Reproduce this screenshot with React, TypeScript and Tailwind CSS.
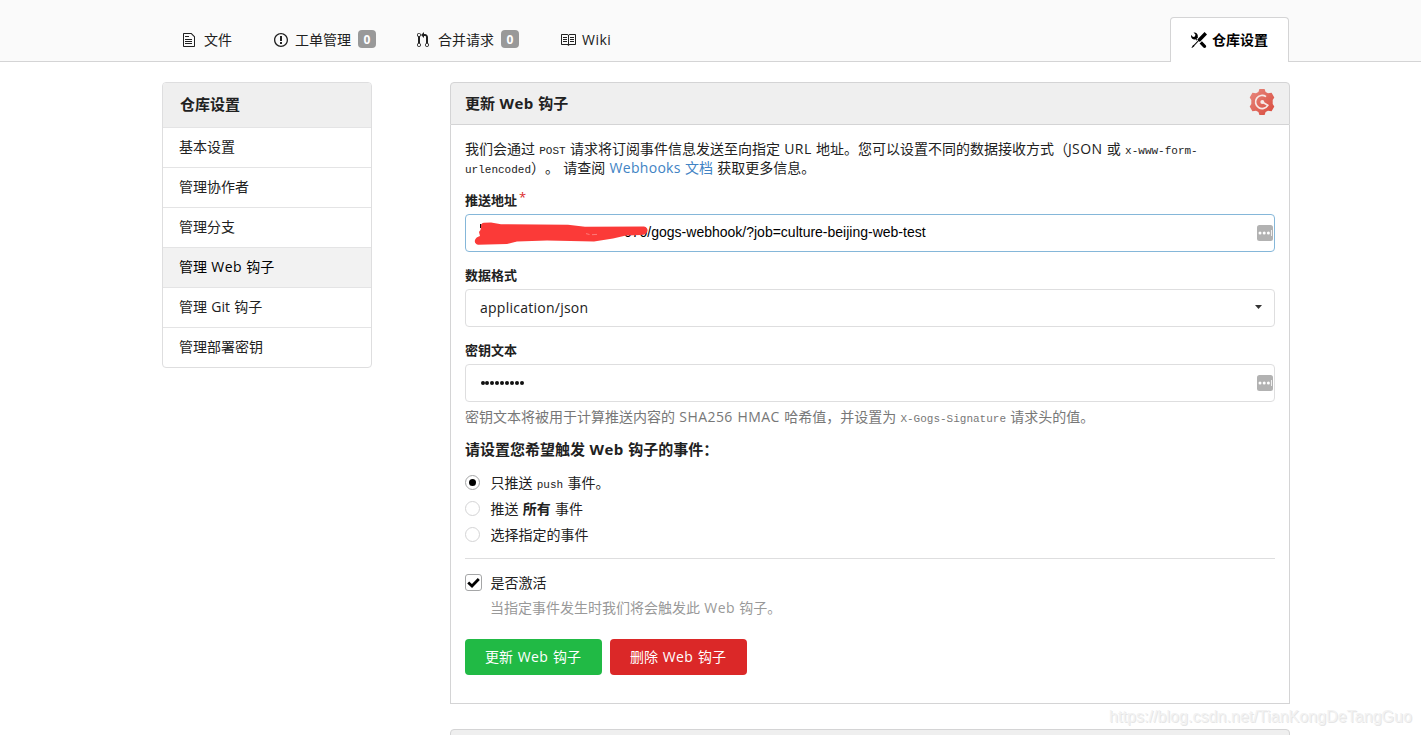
import type { ReactNode } from "react";

const ICONS = {
  file: {
    width: 12,
    d: "M6 5H2V4h4v1zM2 8h7V7H2v1zm0 2h7V9H2v1zm0 2h7v-1H2v1zm10-7.5V14c0 .55-.45 1-1 1H1c-.55 0-1-.45-1-1V2c0-.55.45-1 1-1h7.5L12 4.5zM11 5L8 2H1v12h10V5z",
  },
  issue: {
    width: 14,
    d: "M7 2.3c3.14 0 5.7 2.56 5.7 5.7s-2.56 5.7-5.7 5.7A5.71 5.71 0 0 1 1.3 8c0-3.14 2.56-5.7 5.7-5.7zM7 1C3.14 1 0 4.14 0 8s3.14 7 7 7 7-3.14 7-7-3.14-7-7-7zm1 3H6v5h2V4zm0 6H6v2h2v-2z",
  },
  pull: {
    width: 12,
    d: "M11 11.28V5c-.03-.78-.34-1.47-.94-2.06C9.46 2.35 8.78 2.03 8 2H7V0L4 3l3 3V4h1c.27.02.48.11.69.31.21.2.3.42.31.69v6.28A1.993 1.993 0 0 0 10 15a1.993 1.993 0 0 0 1-3.72zm-1 2.92c-.66 0-1.2-.55-1.2-1.2 0-.65.55-1.2 1.2-1.2.65 0 1.2.55 1.2 1.2 0 .65-.55 1.2-1.2 1.2zM4 3c0-1.11-.89-2-2-2a1.993 1.993 0 0 0-1 3.72v6.56A1.993 1.993 0 0 0 2 15a1.993 1.993 0 0 0 1-3.72V4.72c.59-.34 1-.98 1-1.72zm-.8 10c0 .66-.55 1.2-1.2 1.2-.65 0-1.2-.55-1.2-1.2 0-.65.55-1.2 1.2-1.2.65 0 1.2.55 1.2 1.2zM2 4.2C1.34 4.2.8 3.65.8 3c0-.65.55-1.2 1.2-1.2.65 0 1.2.55 1.2 1.2 0 .65-.55 1.2-1.2 1.2z",
  },
  book: {
    width: 16,
    d: "M3 5h4v1H3V5zm0 3h4V7H3v1zm0 2h4V9H3v1zm11-5h-4v1h4V5zm0 2h-4v1h4V7zm0 2h-4v1h4V9zm2-6v9c0 .55-.45 1-1 1H9.5l-1 1-1-1H2c-.55 0-1-.45-1-1V3c0-.55.45-1 1-1h5.5l1 1 1-1H15c.55 0 1 .45 1 1zm-8 .5L7.5 3H2v9h6V3.5zm7-.5H9.5l-.5.5V12h6V3z",
  },
  tools: {
    width: 16,
    d: "M4.48 7.27c.26.26 1.28 1.33 1.28 1.33l.56-.58-.88-.91 1.69-1.8s-.76-.74-.43-.45c.32-1.19.03-2.51-.87-3.44C4.93.5 3.66.2 2.52.51l1.93 2-.51 1.96-1.89.52-1.93-1.99C-.19 4.17.1 5.48 1 6.4c.94.98 2.29 1.26 3.48.87zm6.44 1.94l-2.33 2.3 3.84 3.98c.31.33.73.49 1.14.49.41 0 .82-.16 1.14-.49.63-.65.63-1.7 0-2.35l-3.79-3.93zM16 2.53L13.55 0 6.33 7.46l.88.91-4.31 4.46-.99.53-1.39 2.27.35.37 2.2-1.44.51-1.02L7.9 9.08l.88.91L16 2.53z",
  },
};

function Icon({ name }: { name: keyof typeof ICONS }) {
  const { width, d } = ICONS[name];
  return (
    <svg
      width={width}
      height={16}
      viewBox={`0 0 ${width} 16`}
      fill="currentColor"
      className="shrink-0"
    >
      <path d={d} />
    </svg>
  );
}

function Count({ children }: { children: ReactNode }) {
  return (
    <span className="mb-[2px] ml-[7px] flex h-[18px] w-[18px] items-center justify-center rounded-[4px] bg-[#999] text-[12px] font-bold text-white">
      {children}
    </span>
  );
}

// Latin words set between Chinese text, slightly opened up
function Latin({ children }: { children: ReactNode }) {
  return <span className="tracking-[0.45px]">{children}</span>;
}

function Code({ children }: { children: ReactNode }) {
  return (
    <code className="font-['Liberation_Mono',monospace] text-[11px] leading-none">
      {children}
    </code>
  );
}

function GogsLogo() {
  return (
    <svg width="26" height="26" viewBox="0 0 26 26" className="mb-[3px] shrink-0">
      <defs>
        <linearGradient id="gogs" x1="0" y1="0" x2="1" y2="1">
          <stop offset="0" stopColor="#e8897f" />
          <stop offset="1" stopColor="#d84a3c" />
        </linearGradient>
      </defs>
      <path
        d="M10.4 0h5.2l1 2.9 2.4 1.3 3.6-.5 2.7 4.7-1.6 2.7v3.8l1.6 2.7-2.7 4.7-3.6-.5-2.4 1.3-1 2.9h-5.2l-1-2.9L7 21.8l-3.6.5L.7 17.6l1.6-2.7v-3.8L.7 8.4l2.7-4.7 3.6.5 2.4-1.3z"
        fill="url(#gogs)"
      />
      <path
        d="M17 7.6A6.6 6.6 0 1 0 18.8 16.4L13.3 13"
        fill="none"
        stroke="#f7e9e7"
        strokeWidth="1.7"
      />
      <circle cx="13.3" cy="13" r="2" fill="#f7e9e7" />
    </svg>
  );
}

function PasswordBadge() {
  return (
    <svg width="16" height="16" viewBox="0 0 16 16" className="shrink-0">
      <rect width="16" height="16" rx="2.5" fill="#b2b2b2" />
      <circle cx="3" cy="8" r="1.5" fill="#fff" />
      <circle cx="7.2" cy="8" r="1.5" fill="#fff" />
      <circle cx="11.4" cy="8" r="1.5" fill="#fff" />
      <path d="M14.5 5v6" stroke="#fff" strokeWidth=".8" />
    </svg>
  );
}

function Radio({ checked, children }: { checked?: boolean; children: ReactNode }) {
  return (
    <label className="flex h-[26px] items-center">
      <span
        className={
          checked
            ? "flex h-[15px] w-[15px] items-center justify-center rounded-full border border-[#a5a6a7]"
            : "flex h-[15px] w-[15px] items-center justify-center rounded-full border border-[#d4d4d5]"
        }
      >
        {checked && <span className="h-[7px] w-[7px] rounded-full bg-black" />}
      </span>
      <span className="ml-[10.5px]">{children}</span>
    </label>
  );
}

const MENU = [
  { key: "options", label: "基本设置" },
  { key: "collaboration", label: "管理协作者" },
  { key: "branches", label: "管理分支" },
  { key: "hooks", label: <>管理 <Latin>Web</Latin> 钩子</>, active: true },
  { key: "git", label: <>管理 <span>Git</span> 钩子</> },
  { key: "keys", label: "管理部署密钥" },
];

export default function App() {
  return (
    <div className="relative h-[735px] w-[1421px] overflow-hidden bg-white font-['Open_Sans','Noto_Sans_CJK_SC',sans-serif] text-[14px] leading-[19px] [word-spacing:0.6px] text-[#212121] [text-spacing-trim:space-all]">
      <header className="flex h-[62px] justify-between border-b border-[#d4d4d5] bg-[#fafafa] pr-[132px] pl-[183px]">
        <nav className="flex items-center pt-[19px]">
          <a className="flex w-[91px] items-center">
            <Icon name="file" />
            <span className="mb-[2px] ml-[9px]">文件</span>
          </a>
          <a className="flex w-[143px] items-center">
            <Icon name="issue" />
            <span className="mb-[2px] ml-[7px]">工单管理</span>
            <Count>0</Count>
          </a>
          <a className="flex w-[143px] items-center">
            <Icon name="pull" />
            <span className="mb-[2px] ml-[9px]">合并请求</span>
            <Count>0</Count>
          </a>
          <a className="flex items-center">
            <Icon name="book" />
            <span className="mb-[2px] ml-[6px] tracking-[0.5px]">Wiki</span>
          </a>
        </nav>
        <a className="mt-[17px] flex h-[45px] w-[119px] items-center rounded-t-[4px] border border-b-0 border-[#d4d4d5] bg-white pl-5 font-bold text-black">
          <Icon name="tools" />
          <span className="mb-[2px] ml-[5px]">仓库设置</span>
        </a>
      </header>

      <main className="flex items-start gap-[78px] pt-5 pl-[162px]">
        <aside className="w-[210px] rounded-[4px] border border-[#dededf]">
          <h4 className="flex h-11 items-center rounded-t-[3px] bg-[#efefef] pb-[2px] pl-[17px] text-[15px] font-bold">
            仓库设置
          </h4>
          {MENU.map(({ key, label, active }) => (
            <a
              key={key}
              className={
                active
                  ? "flex h-10 items-center border-t border-[#e4e4e5] bg-[#f2f2f2] pb-[2px] pl-4 text-black"
                  : "flex h-10 items-center border-t border-[#e4e4e5] pb-[2px] pl-4"
              }
            >
              <span>{label}</span>
            </a>
          ))}
        </aside>

        <div className="w-[840px]">
          <h4 className="flex h-[43px] items-center justify-between rounded-t-[4px] border border-[#d4d4d5] bg-[#efefef] px-[14px] text-[15px] font-bold">
            <span>
              更新 <Latin>Web</Latin> 钩子
            </span>
            <GogsLogo />
          </h4>
          <section className="h-[579px] border border-t-0 border-[#d4d4d5] px-[14px] pt-[14px]">
            <p className="h-[38px] whitespace-nowrap">
              我们会通过 <Code>POST</Code> 请求将订阅事件信息发送至向指定 <Latin>URL</Latin>{" "}
              地址。您可以设置不同的数据接收方式（<Latin>JSON</Latin> 或{" "}
              <Code>x-www-form-</Code>
              <br />
              <Code>urlencoded</Code>）。 请查阅{" "}
              <a className="text-[#4183c4]">
                <span className="tracking-[0.3px]">Webhooks</span> 文档
              </a>{" "}
              获取更多信息。
            </p>

            <label className="mt-[14px] flex h-[19px] text-[13px] font-bold">
              推送地址
              <span className="-mt-[3px] ml-[2px] font-normal text-[#db2828]">*</span>
            </label>
            <div className="relative mt-1 flex h-[38px] items-center justify-between rounded-[4px] border border-[#85b7d9] pr-[1px] pl-[158px] font-['Liberation_Sans',sans-serif] text-black">
              <span className="mb-[2px]">070/gogs-webhook/?job=culture-beijing-web-test</span>
              <PasswordBadge />
              {/* marker stroke hiding the host */}
              <svg width="176" height="26" viewBox="0 0 176 26" className="absolute top-[5px] left-[7px]">
                <path d="M7 4h1.5v4h-1.5z" fill="#111" />
                <path
                  d="M11 2.7L18 2.5L28 4.3L95 4.8L112 6.8L171 6.4Q175 7.5 174.5 11Q173.5 15 168 15L153 15.5L140 18.5L121 21.5L74 20.5L44 21.5L34 24L5 24.8Q1 23.5 2 20Q3 17 7 16L6 12Q8.5 9 8 6Q8 3 11 2.7z"
                  fill="#fb3a38"
                />
                <path d="M113 13.6l3.5.9M119 14.7l5-.3" stroke="#fbb" strokeWidth=".5" />
              </svg>
            </div>

            <label className="mt-[14px] block h-[19px] text-[13px] font-bold">数据格式</label>
            <div className="mt-1 flex h-[38px] items-center justify-between rounded-[4px] border border-[#dededf] pr-[12px] pl-[14px]">
              <span className="mb-[2px] tracking-[0.25px]">application/json</span>
              <svg width="7" height="4" viewBox="0 0 7 4" className="mb-[2px]">
                <path d="M0 0h7L3.5 4z" fill="#333" />
              </svg>
            </div>

            <label className="mt-[14px] block h-[19px] text-[13px] font-bold">密钥文本</label>
            <div className="mt-1 flex h-[38px] items-center justify-between rounded-[4px] border border-[#dededf] pr-[1px] pl-[14.5px]">
              <span className="mb-[1px] flex gap-[0.9px]">
                {Array.from({ length: 9 }, (_, i) => (
                  <span key={i} className="h-1 w-1 rounded-full bg-[#111]" />
                ))}
              </span>
              <PasswordBadge />
            </div>
            <p className="mt-[5px] h-[19px] text-[#777]">
              密钥文本将被用于计算推送内容的 <Latin>SHA256 HMAC</Latin> 哈希值，并设置为{" "}
              <Code>X-Gogs-Signature</Code> 请求头的值。
            </p>

            <h4 className="mt-[14px] h-[19px] text-[15px] font-bold">
              请设置您希望触发 <Latin>Web</Latin> 钩子的事件：
            </h4>
            <div className="mt-[10px]">
              <Radio checked>
                只推送 <Code>push</Code> 事件。
              </Radio>
              <Radio>
                推送 <strong>所有</strong> 事件
              </Radio>
              <Radio>选择指定的事件</Radio>
            </div>

            <hr className="mt-[11px] border-[#dededf]" />

            <label className="mt-[14px] flex h-[19px] items-center">
              <span className="flex h-[17px] w-[17px] items-center justify-center rounded-[3px] border border-[#a5a6a7]">
                <svg width="13" height="11" viewBox="0 0 13 11">
                  <path d="M1.2 5.5L5 9L11.8 2" fill="none" stroke="#000" strokeWidth="2.8" />
                </svg>
              </span>
              <span className="mb-[1px] ml-[8.5px]">是否激活</span>
            </label>
            <p className="mt-[6px] h-[19px] pl-[25px] text-[#999]">
              当指定事件发生时我们将会触发此 <Latin>Web</Latin> 钩子。
            </p>

            <div className="mt-[22px] flex gap-2 text-white [word-spacing:1px]">
              <button className="h-9 w-[137px] rounded-[4px] bg-[#21ba45] pr-[1px] pb-[2px] [word-spacing:1px]">
                更新 <Latin>Web</Latin> 钩子
              </button>
              <button className="h-9 w-[137px] rounded-[4px] bg-[#db2828] pr-[1px] pb-[2px] [word-spacing:1px]">
                删除 <Latin>Web</Latin> 钩子
              </button>
            </div>
          </section>

          <div className="mt-[25px] h-[43px] rounded-t-[4px] border border-[#d4d4d5] bg-[#efefef]" />
        </div>
      </main>

      <span className="absolute right-[9px] bottom-[9px] font-['Liberation_Sans',sans-serif] text-[16px] tracking-[0.05px] text-[#f2f2f2] [text-shadow:1px_1px_0_#e6e6e6]">
        https://blog.csdn.net/TianKongDeTangGuo
      </span>
    </div>
  );
}
